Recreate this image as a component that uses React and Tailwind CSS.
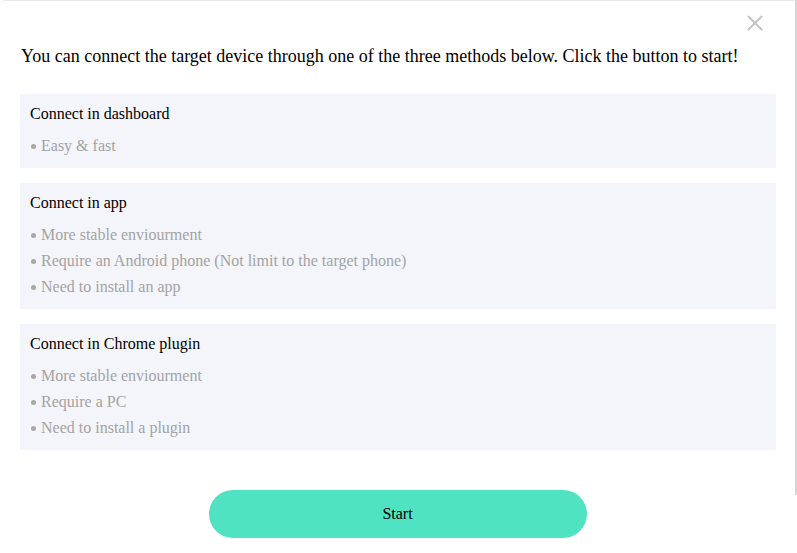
import { X } from 'lucide-react';

const methods = [
    { title: 'Connect in dashboard', items: ['Easy & fast'] },
    {
        title: 'Connect in app',
        items: ['More stable enviourment', 'Require an Android phone (Not limit to the target phone)', 'Need to install an app'],
    },
    {
        title: 'Connect in Chrome plugin',
        items: ['More stable enviourment', 'Require a PC', 'Need to install a plugin'],
    },
];

const App = () => {
    return (
        <div className="w-[797px] h-[553px] overflow-hidden bg-white flex font-['Liberation_Serif','Times_New_Roman',serif]">
            <div className="flex-1 border-t border-gray-200 rounded-tl-md flex flex-col">
                <div className="flex justify-end pt-[9px] pr-[27px] h-[43px]">
                    <X className="w-[26px] h-[26px] text-[#c4c4c4]" strokeWidth={1.9} />
                </div>
                <p className="pl-[21px] text-[18px] leading-[24px] text-black">
                    You can connect the target device through one of the three methods below. Click the button to start!
                </p>

                <div className="mt-[26px] pl-[20px] pr-[19px] flex flex-col gap-[15px]">
                    {methods.map((m) => (
                        <div key={m.title} className="bg-[#f4f5fa] pl-[10px] pt-[7px] pb-[9px]">
                            <div className="text-[16px] leading-[26px] text-black">{m.title}</div>
                            <ul className="mt-[6px]">
                                {m.items.map((it) => (
                                    <li key={it} className="flex items-center text-[16px] leading-[26px] text-[#a3a3a3]">
                                        <span className="w-[5px] h-[5px] rounded-full bg-[#a8a8a8] mr-[5px] ml-[1px]"></span>
                                        {it}
                                    </li>
                                ))}
                            </ul>
                        </div>
                    ))}
                </div>

                <div className="flex justify-center mt-[40px]">
                    <button className="w-[378px] h-[48px] rounded-full bg-[#50e3c2] text-[16px] text-black font-['Liberation_Serif','Times_New_Roman',serif]">
                        Start
                    </button>
                </div>
            </div>
            <div className="w-[2px] h-[495px] bg-[#d6d6d6]"></div>
        </div>
    );
};

export default App;
